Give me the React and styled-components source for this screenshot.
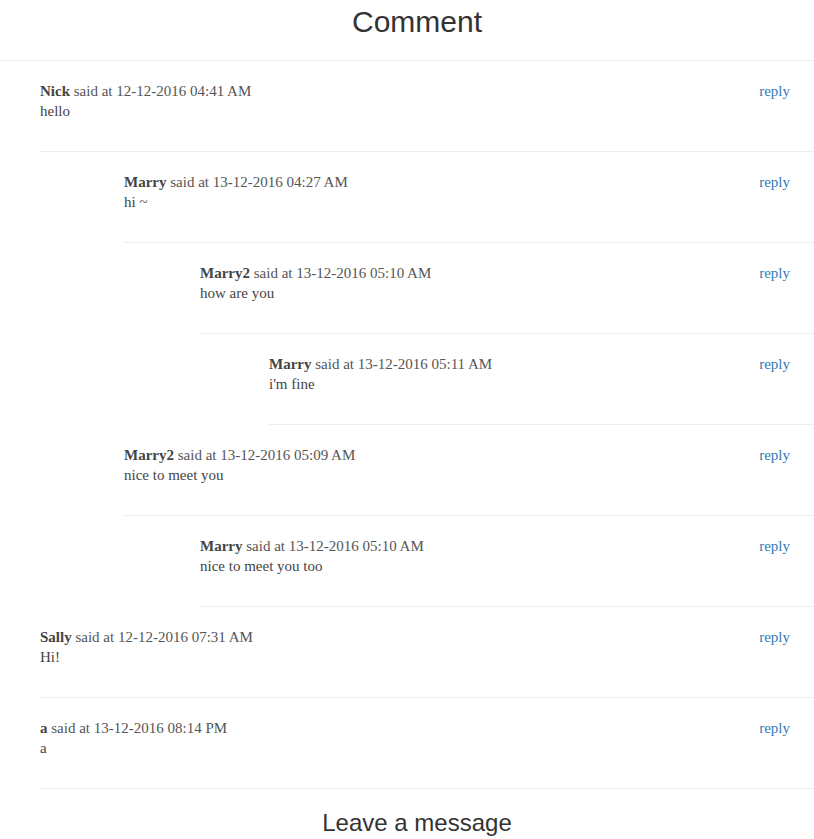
import React from "react";
import styled, { createGlobalStyle } from "styled-components";

const GlobalStyle = createGlobalStyle`
  body {
    margin: 0;
    background: #fff;
    font-family: "Liberation Serif", "DejaVu Serif", serif;
    color: #444;
  }
`;

const comments = [
  {
    id: 1, author: "Nick", time: "12-12-2016 04:41 AM", text: "hello",
    replies: [
      {
        id: 2, author: "Marry", time: "13-12-2016 04:27 AM", text: "hi ~",
        replies: [
          {
            id: 3, author: "Marry2", time: "13-12-2016 05:10 AM", text: "how are you",
            replies: [
              { id: 4, author: "Marry", time: "13-12-2016 05:11 AM", text: "i'm fine", replies: [] },
            ],
          },
        ],
      },
      {
        id: 5, author: "Marry2", time: "13-12-2016 05:09 AM", text: "nice to meet you",
        replies: [
          { id: 6, author: "Marry", time: "13-12-2016 05:10 AM", text: "nice to meet you too", replies: [] },
        ],
      },
    ],
  },
  { id: 7, author: "Sally", time: "12-12-2016 07:31 AM", text: "Hi!", replies: [] },
  { id: 8, author: "a", time: "13-12-2016 08:14 PM", text: "a", replies: [] },
];

// indent of each nesting level, in px
const indents = [0, 84, 76, 69];

const Page = styled.div`
  width: 814px;
`;

const Title = styled.h2`
  margin: 0;
  padding: 0 0 16px 20px;
  line-height: 44px;
  text-align: center;
  font-family: "Liberation Sans", Arial, sans-serif;
  font-weight: 400;
  font-size: 30px;
  color: #333;
  border-bottom: 1px solid #eee;
`;

const SubTitle = styled.h3`
  margin: 12px 0 0;
  padding-left: 20px;
  line-height: 44px;
  text-align: center;
  font-family: "Liberation Sans", Arial, sans-serif;
  font-weight: 400;
  font-size: 24px;
  color: #333;
`;

const List = styled.div`
  padding-left: 40px;
`;

const Thread = styled.div`
  margin-left: ${(p) => p.$indent}px;
`;

const Entry = styled.div`
  display: flex;
  justify-content: space-between;
  align-items: flex-start;
  padding: 20px 24px 30px 0;
  border-bottom: 1px solid #eee;
  font-size: 15px;
  line-height: 20px;
`;

const Meta = styled.div`
  color: #555;
  b {
    color: #444;
  }
`;

const Body = styled.div`
  color: #444;
`;

const Reply = styled.a`
  color: #337ab7;
  text-decoration: none;
  cursor: pointer;
`;

function CommentThread({ c, level }) {
  return (
    <Thread $indent={indents[level] || 0}>
      <Entry>
        <div>
          <Meta>
            <b>{c.author}</b> said at {c.time}
          </Meta>
          <Body>{c.text}</Body>
        </div>
        <Reply href="#">reply</Reply>
      </Entry>
      {c.replies.map((r) => (
        <CommentThread key={r.id} c={r} level={level + 1} />
      ))}
    </Thread>
  );
}

export default function App() {
  return (
    <Page>
      <GlobalStyle />
      <Title>Comment</Title>
      <List>
        {comments.map((c) => (
          <CommentThread key={c.id} c={c} level={0} />
        ))}
      </List>
      <SubTitle>Leave a message</SubTitle>
    </Page>
  );
}
